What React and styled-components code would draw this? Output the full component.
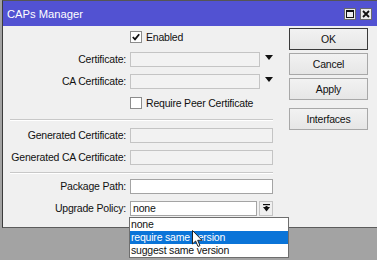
import React from 'react';
import styled, { createGlobalStyle } from 'styled-components';

const GlobalStyle = createGlobalStyle`
  html, body {
    margin: 0;
    padding: 0;
  }
  body {
    background: #a3a3a3;
    font-family: "Liberation Sans", Arial, sans-serif;
  }
`;

const Screen = styled.div`
  position: relative;
  width: 377px;
  height: 260px;
  padding-left: 2px;
  box-sizing: border-box;
  background: #a3a3a3;
  overflow: hidden;
`;

const Window = styled.div`
  width: 375px;
  box-sizing: border-box;
  border-left: 1px solid #3c3c3c;
  border-top: 1px solid #555;
  border-bottom: 1px solid #5c5c5c;
  background: #f0f0f0;
`;

const TitleBar = styled.div`
  height: 25px;
  display: flex;
  align-items: center;
  padding: 0 5px 0 4px;
  background: #5252d2;
`;

const Title = styled.div`
  flex: 1;
  color: #fff;
  font-size: 11.2px;
  padding-top: 1px;
`;

const TitleButtons = styled.div`
  display: flex;
  gap: 4px;
  margin-top: 1px;
`;

const TitleButton = styled.div`
  width: 12px;
  height: 12px;
  box-sizing: border-box;
  border: 1px solid #6a6a6a;
  background: #ececec;
  display: flex;
  align-items: center;
  justify-content: center;
`;

const Body = styled.div`
  height: 201px;
  display: flex;
`;

const FormCol = styled.div`
  width: 283px;
  display: flex;
  flex-direction: column;
`;

const Row = styled.div`
  height: 22px;
  display: flex;
  align-items: center;
  gap: 4px;
`;

const Label = styled.div`
  width: 123px;
  flex-shrink: 0;
  text-align: right;
  font-size: 10.5px;
  letter-spacing: -0.2px;
  color: #111;
  white-space: nowrap;
`;

const Field = styled.div`
  width: ${p => p.$width}px;
  height: 15px;
  box-sizing: border-box;
  border: 1px solid ${p => (p.$white ? '#a4a4a4' : '#c4c4c4')};
  background: ${p => (p.$white ? '#fff' : '#f2f2f2')};
  font-size: 10.5px;
  letter-spacing: -0.2px;
  line-height: 13px;
  padding-left: 2px;
  color: #111;
`;

const Check = styled.div`
  width: 12px;
  height: 12px;
  box-sizing: border-box;
  border: 1px solid #8c8c8c;
  background: #fff;
  display: flex;
  align-items: center;
  justify-content: center;
`;

const CheckText = styled.span`
  font-size: 10.5px;
  letter-spacing: -0.2px;
  color: #111;
`;

const DropArrow = styled.svg`
  margin-left: 1px;
  margin-top: -4px;
`;

const Separator = styled.div`
  width: 263px;
  height: 1px;
  margin: ${p => p.$margin};
  margin-left: 7px;
  background: #c8c8c8;
  border-bottom: 1px solid #fff;
`;

const Combo = styled.div`
  position: relative;
  display: flex;
  gap: 2px;
`;

const ComboButton = styled.div`
  width: 14px;
  height: 15px;
  box-sizing: border-box;
  border: 1px solid #c4c4c4;
  background: #f0f0f0;
  display: flex;
  align-items: center;
  justify-content: center;
`;

const DropList = styled.div`
  position: absolute;
  left: -1px;
  top: 16px;
  width: 160px;
  box-sizing: border-box;
  border: 1px solid #6e6e6e;
  background: #fff;
  z-index: 2;
`;

const Option = styled.div`
  height: 13px;
  line-height: 13px;
  padding-left: 1px;
  font-size: 10.5px;
  letter-spacing: -0.2px;
  color: ${p => (p.$active ? '#fff' : '#111')};
  background: ${p => (p.$active ? '#0a74d8' : 'transparent')};
  white-space: nowrap;
`;

const Cursor = styled.svg`
  position: absolute;
  left: 192px;
  top: 230px;
  z-index: 3;
`;

const ButtonCol = styled.div`
  display: flex;
  flex-direction: column;
  gap: 3px;
  padding: 2px 0 0 3px;
`;

const Button = styled.div`
  width: 79px;
  height: 22px;
  box-sizing: border-box;
  border: 1px solid ${p => (p.$default ? '#3a3a3a' : '#a8a8a8')};
  background: linear-gradient(#f2f2f2, #e6e6e6);
  margin-top: ${p => p.$gapTop || 0}px;
  display: flex;
  align-items: center;
  justify-content: center;
  font-size: 10.5px;
  letter-spacing: -0.2px;
  color: #111;
`;

const Triangle = () => (
  <DropArrow width="8" height="5" viewBox="0 0 8 5">
    <polygon points="0,0 8,0 4,5" fill="#111" />
  </DropArrow>
);

const options = ['none', 'require same version', 'suggest same version'];

const App = () => {
  return (
    <>
      <GlobalStyle />
      <Screen>
        <Window>
          <TitleBar>
            <Title>CAPs Manager</Title>
            <TitleButtons>
              <TitleButton>
                <svg width="8" height="8" viewBox="0 0 8 8">
                  <rect x="0.5" y="0.5" width="7" height="7" fill="none" stroke="#111" strokeWidth="1" />
                  <line x1="0" y1="1.5" x2="8" y2="1.5" stroke="#111" strokeWidth="1" />
                </svg>
              </TitleButton>
              <TitleButton>
                <svg width="8" height="8" viewBox="0 0 8 8">
                  <path d="M1 1 L7 7 M7 1 L1 7" stroke="#111" strokeWidth="1.8" />
                </svg>
              </TitleButton>
            </TitleButtons>
          </TitleBar>

          <Body>
            <FormCol>
              <Row>
                <Label />
                <Check>
                  <svg width="8" height="8" viewBox="0 0 8 8">
                    <path d="M0.8 4 L3 6.3 L7.2 1.2" fill="none" stroke="#111" strokeWidth="1.8" />
                  </svg>
                </Check>
                <CheckText>Enabled</CheckText>
              </Row>
              <Row>
                <Label>Certificate:</Label>
                <Field $width={130} />
                <Triangle />
              </Row>
              <Row>
                <Label>CA Certificate:</Label>
                <Field $width={130} />
                <Triangle />
              </Row>
              <Row>
                <Label />
                <Check />
                <CheckText>Require Peer Certificate</CheckText>
              </Row>

              <Separator $margin="5px 0 3px" />

              <Row>
                <Label>Generated Certificate:</Label>
                <Field $width={143} />
              </Row>
              <Row>
                <Label>Generated CA Certificate:</Label>
                <Field $width={143} />
              </Row>

              <Separator $margin="4px 0 1px" />

              <Row>
                <Label>Package Path:</Label>
                <Field $width={143} $white />
              </Row>
              <Row>
                <Label>Upgrade Policy:</Label>
                <Combo>
                  <Field $width={127} $white>none</Field>
                  <ComboButton>
                    <svg width="7" height="8" viewBox="0 0 7 8">
                      <rect x="0" y="0" width="7" height="1.2" fill="#111" />
                      <polygon points="0,3 7,3 3.5,7.5" fill="#111" />
                      <rect x="2.5" y="2" width="2" height="2" fill="#111" />
                    </svg>
                  </ComboButton>
                  <DropList>
                    {options.map((opt, i) => (
                      <Option key={opt} $active={i === 1}>{opt}</Option>
                    ))}
                  </DropList>
                </Combo>
              </Row>
            </FormCol>

            <ButtonCol>
              <Button $default>OK</Button>
              <Button>Cancel</Button>
              <Button>Apply</Button>
              <Button $gapTop={5}>Interfaces</Button>
            </ButtonCol>
          </Body>
        </Window>

        <Cursor width="12" height="18" viewBox="0 0 12 18">
          <path d="M0.5 0.5 L0.5 14 L3.6 11 L6 16.5 L8 15.6 L5.7 10.3 L10 10.3 Z" fill="#fff" stroke="#222" strokeWidth="1" />
        </Cursor>
      </Screen>
    </>
  );
};

export default App;
